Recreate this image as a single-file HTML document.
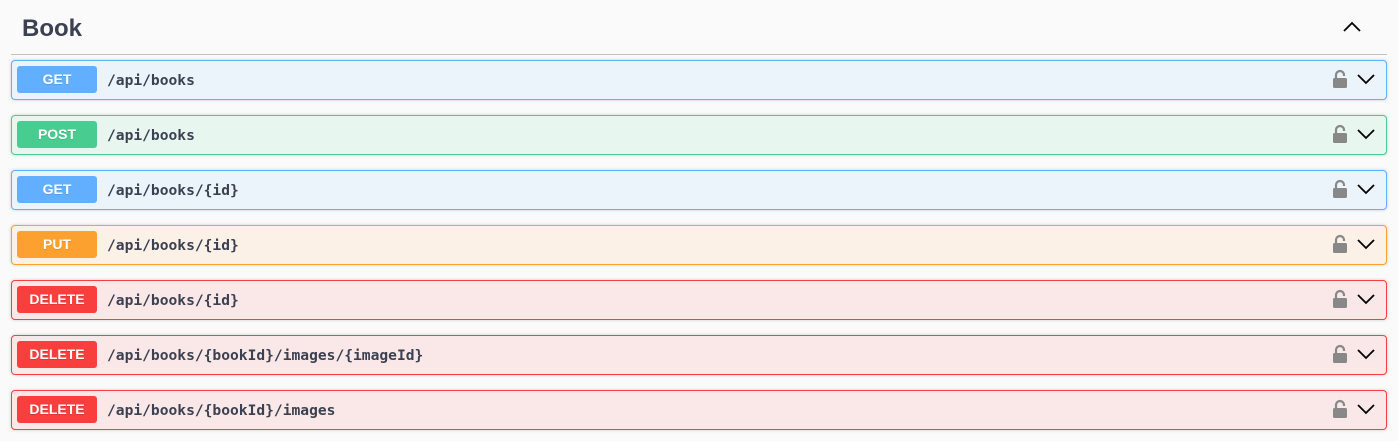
<!DOCTYPE html>
<html><head><style>
body{margin:0;background:#fafafa;width:1398px;height:441px;overflow:hidden;font-family:"Liberation Sans",sans-serif;}
.h{position:absolute;left:11px;top:0;width:1376px;height:54px;border-bottom:1px solid rgba(59,65,81,.3);}
.h span{position:absolute;left:11px;top:15px;font-size:24px;font-weight:bold;color:#3b4151;}
.h svg{position:absolute;right:25px;top:21px;}
.r{position:absolute;left:11px;width:1374px;height:38px;border:1px solid;border-radius:4px;box-shadow:0 0 3px rgba(0,0,0,.19);}
.b{position:absolute;left:5px;top:5px;width:80px;height:27px;border-radius:3px;color:#fff;font-weight:bold;font-size:14px;text-align:center;line-height:27px;text-shadow:0 1px 0 rgba(0,0,0,.1);}
.p{position:absolute;left:95px;top:11px;font-family:"DejaVu Sans Mono","Liberation Mono",monospace;font-weight:bold;font-size:14.6px;color:#3b4151;}
.l{position:absolute;right:38px;top:8px;}
.c{position:absolute;right:10px;top:12px;}
.g{border-color:#61affe;background:#ebf3fb}.g .b{background:#61affe}
.po{border-color:#49cc90;background:#e8f6f0}.po .b{background:#49cc90}
.pu{border-color:#fca130;background:#fbf1e6}.pu .b{background:#fca130}
.d{border-color:#f93e3e;background:#fae7e7}.d .b{background:#f93e3e}
</style></head><body>
<div class="h"><span>Book</span><svg width="20" height="12" viewBox="0 0 20 12"><path d="M2 10 L10 2 L18 10" fill="none" stroke="#000" stroke-width="1.8"/></svg></div>
<div class="r g" style="top:60px"><div class="b">GET</div><div class="p">/api/books</div>
<svg class="l" width="16" height="20" viewBox="0 0 16 20"><path d="M4 9V6a4 4 0 0 1 8 0v1" fill="none" stroke="#888" stroke-width="2.2"/><rect x="1" y="9" width="14" height="10" rx="1.5" fill="#888"/></svg>
<svg class="c" width="20" height="12" viewBox="0 0 20 12"><path d="M2 2 L10 10 L18 2" fill="none" stroke="#000" stroke-width="1.8"/></svg></div>
<div class="r po" style="top:115px"><div class="b">POST</div><div class="p">/api/books</div>
<svg class="l" width="16" height="20" viewBox="0 0 16 20"><path d="M4 9V6a4 4 0 0 1 8 0v1" fill="none" stroke="#888" stroke-width="2.2"/><rect x="1" y="9" width="14" height="10" rx="1.5" fill="#888"/></svg>
<svg class="c" width="20" height="12" viewBox="0 0 20 12"><path d="M2 2 L10 10 L18 2" fill="none" stroke="#000" stroke-width="1.8"/></svg></div>
<div class="r g" style="top:170px"><div class="b">GET</div><div class="p">/api/books/{id}</div>
<svg class="l" width="16" height="20" viewBox="0 0 16 20"><path d="M4 9V6a4 4 0 0 1 8 0v1" fill="none" stroke="#888" stroke-width="2.2"/><rect x="1" y="9" width="14" height="10" rx="1.5" fill="#888"/></svg>
<svg class="c" width="20" height="12" viewBox="0 0 20 12"><path d="M2 2 L10 10 L18 2" fill="none" stroke="#000" stroke-width="1.8"/></svg></div>
<div class="r pu" style="top:225px"><div class="b">PUT</div><div class="p">/api/books/{id}</div>
<svg class="l" width="16" height="20" viewBox="0 0 16 20"><path d="M4 9V6a4 4 0 0 1 8 0v1" fill="none" stroke="#888" stroke-width="2.2"/><rect x="1" y="9" width="14" height="10" rx="1.5" fill="#888"/></svg>
<svg class="c" width="20" height="12" viewBox="0 0 20 12"><path d="M2 2 L10 10 L18 2" fill="none" stroke="#000" stroke-width="1.8"/></svg></div>
<div class="r d" style="top:280px"><div class="b">DELETE</div><div class="p">/api/books/{id}</div>
<svg class="l" width="16" height="20" viewBox="0 0 16 20"><path d="M4 9V6a4 4 0 0 1 8 0v1" fill="none" stroke="#888" stroke-width="2.2"/><rect x="1" y="9" width="14" height="10" rx="1.5" fill="#888"/></svg>
<svg class="c" width="20" height="12" viewBox="0 0 20 12"><path d="M2 2 L10 10 L18 2" fill="none" stroke="#000" stroke-width="1.8"/></svg></div>
<div class="r d" style="top:335px"><div class="b">DELETE</div><div class="p">/api/books/{bookId}/images/{imageId}</div>
<svg class="l" width="16" height="20" viewBox="0 0 16 20"><path d="M4 9V6a4 4 0 0 1 8 0v1" fill="none" stroke="#888" stroke-width="2.2"/><rect x="1" y="9" width="14" height="10" rx="1.5" fill="#888"/></svg>
<svg class="c" width="20" height="12" viewBox="0 0 20 12"><path d="M2 2 L10 10 L18 2" fill="none" stroke="#000" stroke-width="1.8"/></svg></div>
<div class="r d" style="top:390px"><div class="b">DELETE</div><div class="p">/api/books/{bookId}/images</div>
<svg class="l" width="16" height="20" viewBox="0 0 16 20"><path d="M4 9V6a4 4 0 0 1 8 0v1" fill="none" stroke="#888" stroke-width="2.2"/><rect x="1" y="9" width="14" height="10" rx="1.5" fill="#888"/></svg>
<svg class="c" width="20" height="12" viewBox="0 0 20 12"><path d="M2 2 L10 10 L18 2" fill="none" stroke="#000" stroke-width="1.8"/></svg></div>
</body></html>
